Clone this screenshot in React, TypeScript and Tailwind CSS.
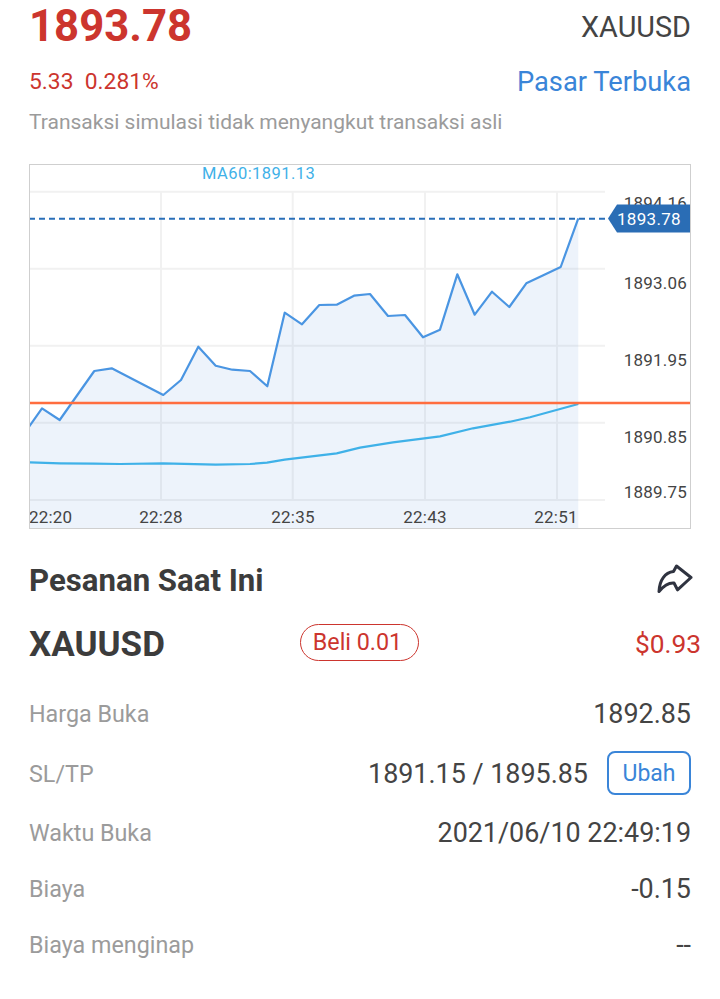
const price: [number, number][] = [
  [29, 426.7], [42, 408.3], [59.7, 420], [94.3, 371], [111.7, 368.3], [163.3, 395], [181, 380], [198.3, 346.7],
  [215.7, 365.7], [232.3, 369.7], [250, 371], [267.3, 386.3], [284.7, 312.7], [302, 324.3], [319.3, 305],
  [336.7, 304.7], [354, 295.7], [370, 294], [388, 316], [405, 315], [423, 337.3], [440, 329.7], [457.3, 274.3],
  [474.7, 314.7], [492, 291.7], [509.3, 307], [526.3, 283.3], [543.3, 275.3], [560.7, 267], [578.3, 218.3],
];
const ma: [number, number][] = [
  [29, 462.3], [60, 463.3], [94, 463.7], [120, 464], [163, 463.3], [215.7, 464.7], [250, 464], [267, 462.7],
  [284.7, 459.7], [336.7, 453.3], [360, 447.7], [393, 442.3], [440, 436.3], [473, 428.3], [510, 421.7],
  [530, 417.3], [578.3, 404],
];
const pts = (a: [number, number][]) => a.map(([x, y]) => `${x - 29},${y - 164}`).join(" ");
const hLines = [191.7, 268.7, 345.7, 422.7, 500];
const vLines = [161, 292.7, 425, 557];
const yLabels: [string, number][] = [["1893.06", 125], ["1891.95", 202], ["1890.85", 279], ["1889.75", 334]];
const xLabels: [string, number][] = [["22:28", 132], ["22:35", 264], ["22:43", 396], ["22:51", 527]];

function Chart() {
  return (
    <div className="mt-[32px] h-[365px] w-[662px] border border-[#cfcfcf] overflow-hidden">
      <svg width="662" height="365" viewBox="0 0 662 365" className="block -m-px" fontFamily="Roboto, sans-serif">
        {hLines.map((y) => (
          <line key={y} x1="0" x2="576" y1={y - 164} y2={y - 164} stroke="#f1f1f1" strokeWidth="2" />
        ))}
        {vLines.map((x) => (
          <line key={x} x1={x - 29} x2={x - 29} y1="28" y2="336" stroke="#f1f1f1" strokeWidth="2" />
        ))}
        <polygon points={`0,365 ${pts(price)} 549.3,365`} fill="#3b7fd6" fillOpacity="0.09" />
        <text x="173" y="15" fontSize="16.5" letterSpacing="0.45" fill="#3fb1e8">MA60:1891.13</text>
        <text x="658" y="45" fontSize="17" textAnchor="end" letterSpacing="0.2" fill="#444">1894.16</text>
        {yLabels.map(([t, y]) => (
          <text key={t} x="658" y={y} fontSize="17" textAnchor="end" letterSpacing="0.2" fill="#444">{t}</text>
        ))}
        <text x="0" y="359" fontSize="17" letterSpacing="0.2" fill="#444">22:20</text>
        {xLabels.map(([t, x]) => (
          <text key={t} x={x} y="359" fontSize="17" textAnchor="middle" letterSpacing="0.2" fill="#444">{t}</text>
        ))}
        <polyline points={pts(ma)} fill="none" stroke="#3fb1e8" strokeWidth="2.2" />
        <polyline points={pts(price)} fill="none" stroke="#4a95e2" strokeWidth="2.2" strokeLinejoin="round" />
        <line x1="0" x2="578" y1="54.7" y2="54.7" stroke="#2a6fb9" strokeWidth="2" strokeDasharray="6 4" />
        <line x1="0" x2="662" y1="239" y2="239" stroke="#ff6d3f" strokeWidth="2.4" />
        <polygon points="579,54.5 588,40.5 662,40.5 662,68.5 588,68.5" fill="#2a6db5" />
        <text x="588" y="61" fontSize="17" letterSpacing="0.3" fill="#fff">1893.78</text>
      </svg>
    </div>
  );
}

function Row({ label, value, h, extra }: { label: string; value: string; h: string; extra?: boolean }) {
  return (
    <div className={`flex items-center justify-between ${h}`}>
      <span className="text-[23.3px] text-[#9b9b9b]">{label}</span>
      <div className="flex items-center">
        <span className="text-[26.9px] text-[#444444]">{value}</span>
        {extra && (
          <span className="mb-[2px] ml-[19px] flex h-[44px] w-[84px] items-center justify-center rounded-[8px] border-2 border-[#3a85d8] pt-[2px] text-[23px] text-[#3a85d8]">
            Ubah
          </span>
        )}
      </div>
    </div>
  );
}

export default function App() {
  return (
    <div className="h-[999px] w-[720px] overflow-hidden bg-white px-[29px] font-['Roboto',sans-serif]">
      <div className="flex h-[53px] items-center justify-between">
        <span className="text-[43.7px] font-bold leading-none text-[#cc352e]">1893.78</span>
        <span className="mt-[2px] text-[28.8px] text-[#444444]">XAUUSD</span>
      </div>
      <div className="mt-[9px] flex h-[40px] items-center justify-between">
        <span className="text-[22.8px] text-[#cc352e]">5.33&nbsp;&nbsp;0.281%</span>
        <span className="text-[27.3px] text-[#3a85d8]">Pasar Terbuka</span>
      </div>
      <div className="mt-[10px] h-[20px] text-[21px] leading-[20px] text-[#9b9b9b]">Transaksi simulasi tidak menyangkut transaksi asli</div>
      <Chart />
      <div className="mt-[27px] flex h-[50px] items-center justify-between">
        <span className="text-[31.2px] font-bold text-[#3c3c3c]">Pesanan Saat Ini</span>
        <svg width="36" height="32" viewBox="0 0 36 32" fill="none" stroke="#2f3340" strokeWidth="3" strokeLinejoin="round" strokeLinecap="round" className="mb-[5px] mr-[-2px]">
          <path d="M2 28.5 C2.5 17 8 9.5 16.5 8.5 L19.5 3 L34 14.5 L20.5 26.8 L17 20 C11 19.5 6.5 23 2 28.5 Z" />
        </svg>
      </div>
      <div className="relative mt-[14px] flex h-[50px] items-center">
        <span className="w-[271px] text-[35px] font-bold text-[#3c3c3c]">XAUUSD</span>
        <span className="mb-[5px] flex h-[37px] w-[119px] items-center justify-center rounded-full border border-[#cc352e] pr-[4px] text-[23.3px] text-[#cc352e]">
          Beli 0.01
        </span>
        <span className="absolute right-[-10px] text-[26.3px] text-[#cc352e]">$0.93</span>
      </div>
      <div className="mt-[15px]">
        <Row label="Harga Buka" value="1892.85" h="h-[59px]" />
        <Row label="SL/TP" value="1891.15 / 1895.85" h="h-[60px]" extra />
        <Row label="Waktu Buka" value="2021/06/10 22:49:19" h="h-[58px]" />
        <Row label="Biaya" value="-0.15" h="h-[54px]" />
        <Row label="Biaya menginap" value="--" h="h-[58px]" />
      </div>
    </div>
  );
}
